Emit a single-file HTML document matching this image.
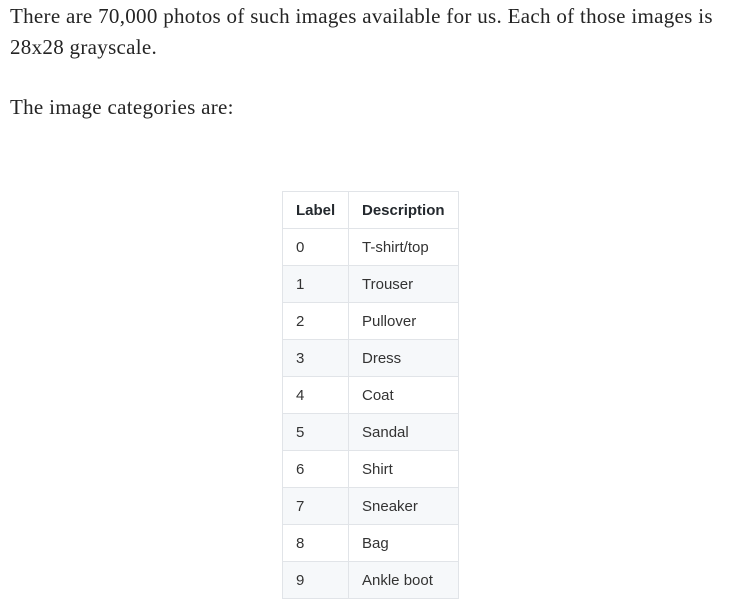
<!DOCTYPE html>
<html><head><meta charset="utf-8"><style>
html,body{margin:0;padding:0;background:#fff;width:753px;height:616px;overflow:hidden}
p{font-family:"Liberation Serif",serif;font-size:21px;color:#242424;margin:0;position:absolute;left:10px;line-height:31px;letter-spacing:0.3px;white-space:nowrap}
table{position:absolute;left:282px;top:191px;border-collapse:collapse;table-layout:fixed;width:176px;font-family:"Liberation Sans",sans-serif;font-size:15px;color:#333}
td,th{border:1px solid #e1e4e8;height:36px;padding:0 13px;text-align:left;box-sizing:border-box;white-space:nowrap}
th{font-weight:600;color:#24292e}
td:first-child,th:first-child{width:66px}
td:last-child,th:last-child{width:110px}
tr:nth-child(2n+1) td{background:#f6f8fa}
tr{height:37px}
</style></head><body>
<p style="top:1px">There are 70,000 photos of such images available for us. Each of those images is<br>28x28 grayscale.</p>
<p style="top:92px">The image categories are:</p>
<table>
<tr><th>Label</th><th>Description</th></tr>
<tr><td>0</td><td>T-shirt/top</td></tr>
<tr><td>1</td><td>Trouser</td></tr>
<tr><td>2</td><td>Pullover</td></tr>
<tr><td>3</td><td>Dress</td></tr>
<tr><td>4</td><td>Coat</td></tr>
<tr><td>5</td><td>Sandal</td></tr>
<tr><td>6</td><td>Shirt</td></tr>
<tr><td>7</td><td>Sneaker</td></tr>
<tr><td>8</td><td>Bag</td></tr>
<tr><td>9</td><td>Ankle boot</td></tr>
</table>
</body></html>
